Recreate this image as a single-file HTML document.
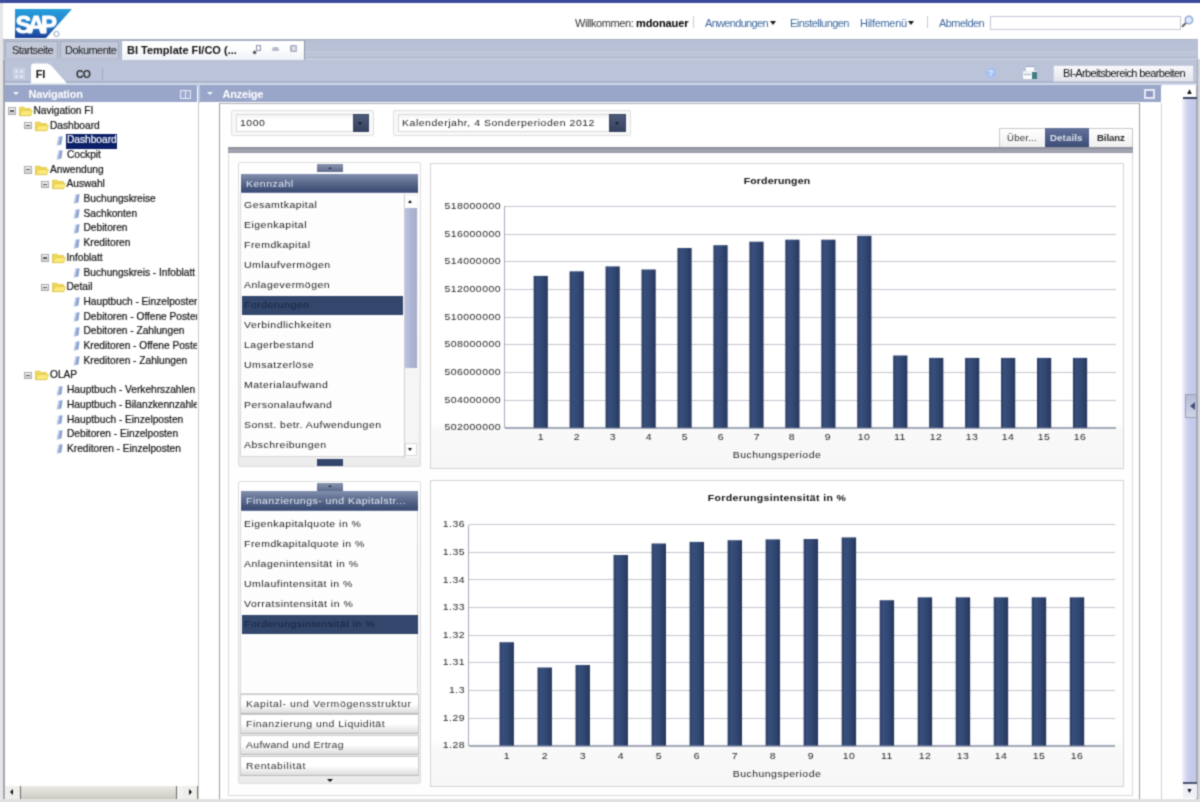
<!DOCTYPE html>
<html><head><meta charset="utf-8"><title>SAP BI</title>
<style>
html,body{margin:0;padding:0;}
body{width:1200px;height:802px;overflow:hidden;background:#fff;position:relative;font-family:"Liberation Sans",sans-serif;font-size:11px;color:#000;}
div{position:absolute;box-sizing:border-box;}
svg{position:absolute;overflow:visible;}
.t{white-space:nowrap;line-height:14px;margin-top:-7px;}
.th{font-size:11px;letter-spacing:-0.55px;}           /* tahoma-ish */
.tr{font-size:10.2px;letter-spacing:-0.02px;color:#0c0c0c;-webkit-text-stroke:0.2px #222;}                 /* tree arial */
.v{font-size:9.4px;letter-spacing:0.43px;color:#222;transform:scaleX(1.12);transform-origin:0 50%;}   /* verdana-ish */
.vs{font-size:9.4px;letter-spacing:0.4px;color:#262626;transform:scaleX(1.12);transform-origin:0 50%;}
.r{text-align:right;transform-origin:100% 50%;}
.c{text-align:center;transform-origin:50% 50%;}
#w{left:0;top:0;width:1200px;height:802px;filter:url(#soft);}
</style></head><body><svg width="0" height="0" style="position:absolute"><defs><filter id="soft" x="-2%" y="-3%" width="104%" height="106%" color-interpolation-filters="sRGB"><feConvolveMatrix order="3" kernelMatrix="0.0361 0.1178 0.0361 0.1178 0.3844 0.1178 0.0361 0.1178 0.0361" edgeMode="duplicate" preserveAlpha="true"/></filter></defs></svg><div id="w">

<div style="left:-20px;top:-20px;width:1240px;height:842px;background:#fff;"></div>
<div style="left:-20px;top:-20px;width:1240px;height:23px;background:#3c4a9b;"></div>
<div style="left:-20px;top:3px;width:23px;height:819px;background:#e6e6e6;"></div>
<div style="left:2.5px;top:59px;width:2.5px;height:740px;background:#a3a5b2;"></div>
<div style="left:1196px;top:59px;width:2.2px;height:740px;background:#a6a9b4;"></div>
<div style="left:1198.2px;top:59px;width:21.8px;height:740px;background:#d6d7dc;"></div>
<div style="left:-20px;top:798.8px;width:1240px;height:24px;background:#e2e2e2;"></div>
<svg style="left:15px;top:9px" width="58" height="30" viewBox="0 0 58 30">
<defs><linearGradient id="sg" x1="0" y1="0" x2="0" y2="1"><stop offset="0" stop-color="#239fdc"/><stop offset="0.5" stop-color="#2580cc"/><stop offset="1" stop-color="#1d3f95"/></linearGradient></defs>
<path d="M0 0 H57 L31 29 H0 Z" fill="url(#sg)"/>
<text x="0.5" y="23.6" font-family="Liberation Sans, sans-serif" font-weight="bold" font-size="24" letter-spacing="-3.9" fill="#fff" stroke="#fff" stroke-width="0.9" stroke-linejoin="round">SAP</text>
<circle cx="41.5" cy="25" r="2.6" fill="#fff" stroke="#8a96b4" stroke-width="0.9"/>
</svg>
<div class="t th" style="left:575px;top:22.7px;color:#333;letter-spacing:-0.42px">Willkommen: <b style="letter-spacing:-0.1px;color:#000">mdonauer</b></div>
<div style="left:693px;top:16px;width:1px;height:12px;background:#c5c9d6;"></div>
<div class="t th" style="left:705px;top:22.7px;color:#3f6aa0;letter-spacing:-0.68px">Anwendungen</div>
<div style="left:769.5px;top:20.5px;width:0px;height:0px;border-left:3.5px solid transparent;border-right:3.5px solid transparent;border-top:4.5px solid #1a1a1a;"></div>
<div class="t th" style="left:790px;top:22.7px;color:#3f6aa0">Einstellungen</div>
<div class="t th" style="left:860px;top:22.7px;color:#3f6aa0;letter-spacing:-0.3px">Hilfemenü</div>
<div style="left:907.5px;top:20.5px;width:0px;height:0px;border-left:3.5px solid transparent;border-right:3.5px solid transparent;border-top:4.5px solid #1a1a1a;"></div>
<div style="left:927px;top:16px;width:1px;height:12px;background:#c5c9d6;"></div>
<div class="t th" style="left:939px;top:22.7px;color:#3f6aa0">Abmelden</div>
<div style="left:990px;top:15.7px;width:190.6px;height:14.6px;background:#fff;border:1.3px solid #c3c6d8;"></div>
<svg style="left:1181px;top:14px" width="15" height="15" viewBox="0 0 15 15"><path d="M5.2 8.6 L1.6 12.2" stroke="#6a5a58" stroke-width="2" stroke-linecap="round"/><circle cx="7.9" cy="6" r="3.7" fill="#e3ecfa" stroke="#8fabde" stroke-width="1.6"/></svg>
<div style="left:3px;top:39px;width:1195px;height:20.5px;background:#b8c0d5;"></div>
<div style="left:3px;top:39px;width:1194px;height:1px;background:#a8aec0;"></div>
<div style="left:305px;top:51px;width:892px;height:1px;background:#c3cadc;"></div>
<div style="left:305px;top:52px;width:892px;height:5px;background:#bcc4d8;"></div>
<div style="left:305px;top:57px;width:892px;height:1px;background:#aab2c7;"></div>
<div style="left:305px;top:58px;width:892px;height:1.5px;background:#c6cddd;"></div>
<div style="left:5px;top:41px;width:53px;height:17px;background:#c3c9d9;border:1px solid #a3abc0;border-bottom:none;"></div>
<div class="t th" style="left:12px;top:50px;color:#222">Startseite</div>
<div style="left:60px;top:41px;width:59px;height:17px;background:#c3c9d9;border:1px solid #a3abc0;border-bottom:none;"></div>
<div class="t th" style="left:65px;top:50px;color:#222">Dokumente</div>
<div style="left:121px;top:39.5px;width:183.8px;height:20px;background:linear-gradient(#ffffff 30%,#eef1f8);border:1px solid #a9b1c6;border-right:1.3px solid #8f97a8;border-bottom:none;"></div>
<div class="t" style="left:127px;top:50px;color:#111;letter-spacing:0px"><b>BI Template FI/CO (...</b></div>
<div style="left:255.6px;top:45.3px;width:5.6px;height:5.8px;border:1.3px solid #8d93a4;background:#f4f6fa;"></div>
<div style="left:252.8px;top:50.8px;width:3px;height:2.6px;background:#4a4e5a;transform:rotate(-45deg);"></div>
<div style="left:271.5px;top:46.8px;width:7.6px;height:4.6px;background:#b5bdcc;border-radius:2.5px 2.5px 1px 1px;"></div>
<div style="left:289.5px;top:45.2px;width:7.6px;height:7px;background:#a9b1c2;border-radius:1px;"></div>
<svg style="left:289.5px;top:45.2px" width="7.6" height="7" viewBox="0 0 7.6 7"><path d="M2 1.6 L5.6 5.4 M5.6 1.6 L2 5.4" stroke="#f2f4f8" stroke-width="1.3"/></svg>
<div style="left:5px;top:59.5px;width:1192px;height:26px;background:#bac3d8;"></div>
<div style="left:5px;top:81.3px;width:1192px;height:1.4px;background:#a9b3cb;"></div>
<div style="left:5px;top:82.7px;width:1192px;height:2.6px;background:#cfd6e6;"></div>
<svg style="left:31px;top:60px" width="40" height="25" viewBox="0 0 40 25"><path d="M0 23.5 V6.5 Q0 3.5 3 3.5 H15 Q19 3.5 21.5 7 L36 23.5 Z" fill="#fff"/></svg>
<div style="left:13px;top:68px;width:12px;height:11px;background:#c4cce1;border:1px solid #cdd4e6;"></div>
<div style="left:15px;top:70px;width:3px;height:3px;background:#dde3f1;"></div>
<div style="left:20px;top:70px;width:3px;height:3px;background:#dde3f1;"></div>
<div style="left:15px;top:74.5px;width:3px;height:3px;background:#dde3f1;"></div>
<div style="left:20px;top:74.5px;width:3px;height:3px;background:#dde3f1;"></div>
<div class="t" style="left:35.8px;top:74px;color:#111;letter-spacing:-0.3px"><b>FI</b></div>
<div class="t" style="left:76px;top:74px;color:#2a2a2a;letter-spacing:-0.9px;font-size:10.5px"><b>CO</b></div>
<div style="left:101.5px;top:68px;width:1px;height:12px;background:#a2abc3;"></div>
<div style="left:984.5px;top:67px;width:12px;height:12px;border-radius:6px;background:radial-gradient(circle,#9dbaf4 0%,#a6c0f2 50%,rgba(180,190,214,0) 78%);"></div>
<div class="t" style="left:988px;top:73.3px;font-size:9px;font-weight:bold;color:#e8effc">?</div>
<div style="left:1026px;top:66px;width:8px;height:6px;background:#fbfcfe;border-top:1px solid #9aa6be;"></div>
<div style="left:1022.5px;top:71px;width:14px;height:7.5px;background:linear-gradient(#e9eef5,#ffffff);border-radius:1px;"></div>
<div style="left:1031.5px;top:72px;width:5px;height:6.5px;background:#3f7f80;"></div>
<div style="left:1024px;top:73.5px;width:7px;height:1px;background:#9fb0c4;"></div>
<div style="left:1053px;top:65px;width:141px;height:17px;background:linear-gradient(#f7f8fb,#e3e6ee);border:1px solid #c9cedb;"></div>
<div class="t th" style="left:1063px;top:73px;color:#111;letter-spacing:-0.62px">BI-Arbeitsbereich bearbeiten</div>
<div style="left:5px;top:85.3px;width:192px;height:17.2px;background:#99a6c9;"></div>
<div style="left:5px;top:102.5px;width:192px;height:696px;background:#fff;"></div>
<div style="left:12.5px;top:92.3px;width:0px;height:0px;border-left:3px solid transparent;border-right:3px solid transparent;border-top:3.5px solid #f4f6fc;"></div>
<div class="t" style="left:28.5px;top:93.7px;color:#fff;letter-spacing:-0.2px"><b>Navigation</b></div>
<div style="left:179.7px;top:89.5px;width:11.6px;height:9.4px;border:1.6px solid #e6eaf6;background:#a0acd0;"></div>
<div style="left:184.8px;top:90px;width:1.4px;height:8.5px;background:#e6eaf6;"></div>
<div style="left:199.3px;top:85.3px;width:962px;height:17.2px;background:#99a6c9;"></div>
<div style="left:207.3px;top:92.3px;width:0px;height:0px;border-left:3px solid transparent;border-right:3px solid transparent;border-top:3.5px solid #f4f6fc;"></div>
<div class="t" style="left:222.5px;top:93.7px;color:#fff;letter-spacing:-0.2px"><b>Anzeige</b></div>
<div style="left:1144.3px;top:89.4px;width:10.8px;height:9.6px;border:2px solid #e6e9f6;background:#8f99c4;"></div>
<div style="left:197.5px;top:85px;width:2px;height:17.5px;background:#bcc6df;"></div>
<div style="left:198px;top:102.5px;width:1px;height:696px;background:#c9c9ce;"></div>
<div style="left:1161px;top:102.5px;width:1px;height:696px;background:#cfd0d6;"></div>
<div style="left:219.2px;top:102.5px;width:1.1px;height:696px;background:#9c9da3;"></div>
<div style="left:219.3px;top:102.5px;width:920.6px;height:1.5px;background:#a9aab4;"></div>
<div style="left:1138.7px;top:102.5px;width:1.1px;height:696px;background:#9c9da3;"></div>
<div style="left:5px;top:101px;width:192px;height:684px;overflow:hidden;">
<div style="left:2.7px;top:6.2px;width:8px;height:7.6px;background:linear-gradient(#f4f4f4,#cfcfd2);border:1px solid #a9a9ae;"></div>
<div style="left:4.7px;top:9.4px;width:4px;height:1.2px;background:#5a5a5e;"></div>
<svg style="left:13.5px;top:3.8px" width="14" height="12" viewBox="0 0 14 12"><path d="M0.5 2.2 H5 L6.5 3.6 H11.5 V10.6 H0.5 Z" fill="#f1d94f" stroke="#d9bd45" stroke-width="0.7"/><path d="M0.5 10.6 L3 5.6 H13.5 L11.8 10.6 Z" fill="#f9ea7a" stroke="#dcc24a" stroke-width="0.7"/></svg>
<div class="t tr" style="left:28.5px;top:9.8px;">Navigation FI</div>
<div style="left:19.2px;top:20.9px;width:8px;height:7.6px;background:linear-gradient(#f4f4f4,#cfcfd2);border:1px solid #a9a9ae;"></div>
<div style="left:21.2px;top:24.1px;width:4px;height:1.2px;background:#5a5a5e;"></div>
<svg style="left:30.0px;top:18.5px" width="14" height="12" viewBox="0 0 14 12"><path d="M0.5 2.2 H5 L6.5 3.6 H11.5 V10.6 H0.5 Z" fill="#f1d94f" stroke="#d9bd45" stroke-width="0.7"/><path d="M0.5 10.6 L3 5.6 H13.5 L11.8 10.6 Z" fill="#f9ea7a" stroke="#dcc24a" stroke-width="0.7"/></svg>
<div class="t tr" style="left:45.0px;top:24.5px;">Dashboard</div>
<svg style="left:51.0px;top:34.6px" width="8" height="10" viewBox="0 0 8 10"><path d="M2.6 0.8 L6.6 0.3 L5.4 8.6 L0.8 9.6 Z" fill="#8ba2cf"/><path d="M2.6 0.8 L4 0.6 L2.4 9.2 L0.8 9.6 Z" fill="#c2cee8"/></svg>
<div style="left:61.0px;top:32.6px;width:51px;height:15px;background:#0c2068;"></div>
<div class="t tr" style="left:62.0px;top:39.2px;color:#fff;-webkit-text-stroke:0.2px #fff">Dashboard</div>
<svg style="left:51.0px;top:49.3px" width="8" height="10" viewBox="0 0 8 10"><path d="M2.6 0.8 L6.6 0.3 L5.4 8.6 L0.8 9.6 Z" fill="#8ba2cf"/><path d="M2.6 0.8 L4 0.6 L2.4 9.2 L0.8 9.6 Z" fill="#c2cee8"/></svg>
<div class="t tr" style="left:62.0px;top:53.9px;">Cockpit</div>
<div style="left:19.2px;top:65.0px;width:8px;height:7.6px;background:linear-gradient(#f4f4f4,#cfcfd2);border:1px solid #a9a9ae;"></div>
<div style="left:21.2px;top:68.2px;width:4px;height:1.2px;background:#5a5a5e;"></div>
<svg style="left:30.0px;top:62.6px" width="14" height="12" viewBox="0 0 14 12"><path d="M0.5 2.2 H5 L6.5 3.6 H11.5 V10.6 H0.5 Z" fill="#f1d94f" stroke="#d9bd45" stroke-width="0.7"/><path d="M0.5 10.6 L3 5.6 H13.5 L11.8 10.6 Z" fill="#f9ea7a" stroke="#dcc24a" stroke-width="0.7"/></svg>
<div class="t tr" style="left:45.0px;top:68.6px;">Anwendung</div>
<div style="left:35.7px;top:79.7px;width:8px;height:7.6px;background:linear-gradient(#f4f4f4,#cfcfd2);border:1px solid #a9a9ae;"></div>
<div style="left:37.7px;top:82.9px;width:4px;height:1.2px;background:#5a5a5e;"></div>
<svg style="left:46.5px;top:77.3px" width="14" height="12" viewBox="0 0 14 12"><path d="M0.5 2.2 H5 L6.5 3.6 H11.5 V10.6 H0.5 Z" fill="#f1d94f" stroke="#d9bd45" stroke-width="0.7"/><path d="M0.5 10.6 L3 5.6 H13.5 L11.8 10.6 Z" fill="#f9ea7a" stroke="#dcc24a" stroke-width="0.7"/></svg>
<div class="t tr" style="left:61.5px;top:83.3px;">Auswahl</div>
<svg style="left:67.5px;top:93.4px" width="8" height="10" viewBox="0 0 8 10"><path d="M2.6 0.8 L6.6 0.3 L5.4 8.6 L0.8 9.6 Z" fill="#8ba2cf"/><path d="M2.6 0.8 L4 0.6 L2.4 9.2 L0.8 9.6 Z" fill="#c2cee8"/></svg>
<div class="t tr" style="left:78.5px;top:98.0px;">Buchungskreise</div>
<svg style="left:67.5px;top:108.1px" width="8" height="10" viewBox="0 0 8 10"><path d="M2.6 0.8 L6.6 0.3 L5.4 8.6 L0.8 9.6 Z" fill="#8ba2cf"/><path d="M2.6 0.8 L4 0.6 L2.4 9.2 L0.8 9.6 Z" fill="#c2cee8"/></svg>
<div class="t tr" style="left:78.5px;top:112.7px;">Sachkonten</div>
<svg style="left:67.5px;top:122.8px" width="8" height="10" viewBox="0 0 8 10"><path d="M2.6 0.8 L6.6 0.3 L5.4 8.6 L0.8 9.6 Z" fill="#8ba2cf"/><path d="M2.6 0.8 L4 0.6 L2.4 9.2 L0.8 9.6 Z" fill="#c2cee8"/></svg>
<div class="t tr" style="left:78.5px;top:127.4px;">Debitoren</div>
<svg style="left:67.5px;top:137.5px" width="8" height="10" viewBox="0 0 8 10"><path d="M2.6 0.8 L6.6 0.3 L5.4 8.6 L0.8 9.6 Z" fill="#8ba2cf"/><path d="M2.6 0.8 L4 0.6 L2.4 9.2 L0.8 9.6 Z" fill="#c2cee8"/></svg>
<div class="t tr" style="left:78.5px;top:142.1px;">Kreditoren</div>
<div style="left:35.7px;top:153.2px;width:8px;height:7.6px;background:linear-gradient(#f4f4f4,#cfcfd2);border:1px solid #a9a9ae;"></div>
<div style="left:37.7px;top:156.4px;width:4px;height:1.2px;background:#5a5a5e;"></div>
<svg style="left:46.5px;top:150.8px" width="14" height="12" viewBox="0 0 14 12"><path d="M0.5 2.2 H5 L6.5 3.6 H11.5 V10.6 H0.5 Z" fill="#f1d94f" stroke="#d9bd45" stroke-width="0.7"/><path d="M0.5 10.6 L3 5.6 H13.5 L11.8 10.6 Z" fill="#f9ea7a" stroke="#dcc24a" stroke-width="0.7"/></svg>
<div class="t tr" style="left:61.5px;top:156.8px;">Infoblatt</div>
<svg style="left:67.5px;top:166.9px" width="8" height="10" viewBox="0 0 8 10"><path d="M2.6 0.8 L6.6 0.3 L5.4 8.6 L0.8 9.6 Z" fill="#8ba2cf"/><path d="M2.6 0.8 L4 0.6 L2.4 9.2 L0.8 9.6 Z" fill="#c2cee8"/></svg>
<div class="t tr" style="left:78.5px;top:171.5px;">Buchungskreis - Infoblatt</div>
<div style="left:35.7px;top:182.6px;width:8px;height:7.6px;background:linear-gradient(#f4f4f4,#cfcfd2);border:1px solid #a9a9ae;"></div>
<div style="left:37.7px;top:185.8px;width:4px;height:1.2px;background:#5a5a5e;"></div>
<svg style="left:46.5px;top:180.2px" width="14" height="12" viewBox="0 0 14 12"><path d="M0.5 2.2 H5 L6.5 3.6 H11.5 V10.6 H0.5 Z" fill="#f1d94f" stroke="#d9bd45" stroke-width="0.7"/><path d="M0.5 10.6 L3 5.6 H13.5 L11.8 10.6 Z" fill="#f9ea7a" stroke="#dcc24a" stroke-width="0.7"/></svg>
<div class="t tr" style="left:61.5px;top:186.2px;">Detail</div>
<svg style="left:67.5px;top:196.3px" width="8" height="10" viewBox="0 0 8 10"><path d="M2.6 0.8 L6.6 0.3 L5.4 8.6 L0.8 9.6 Z" fill="#8ba2cf"/><path d="M2.6 0.8 L4 0.6 L2.4 9.2 L0.8 9.6 Z" fill="#c2cee8"/></svg>
<div class="t tr" style="left:78.5px;top:200.9px;">Hauptbuch - Einzelposten</div>
<svg style="left:67.5px;top:211.0px" width="8" height="10" viewBox="0 0 8 10"><path d="M2.6 0.8 L6.6 0.3 L5.4 8.6 L0.8 9.6 Z" fill="#8ba2cf"/><path d="M2.6 0.8 L4 0.6 L2.4 9.2 L0.8 9.6 Z" fill="#c2cee8"/></svg>
<div class="t tr" style="left:78.5px;top:215.6px;">Debitoren - Offene Posten</div>
<svg style="left:67.5px;top:225.7px" width="8" height="10" viewBox="0 0 8 10"><path d="M2.6 0.8 L6.6 0.3 L5.4 8.6 L0.8 9.6 Z" fill="#8ba2cf"/><path d="M2.6 0.8 L4 0.6 L2.4 9.2 L0.8 9.6 Z" fill="#c2cee8"/></svg>
<div class="t tr" style="left:78.5px;top:230.3px;">Debitoren - Zahlungen</div>
<svg style="left:67.5px;top:240.4px" width="8" height="10" viewBox="0 0 8 10"><path d="M2.6 0.8 L6.6 0.3 L5.4 8.6 L0.8 9.6 Z" fill="#8ba2cf"/><path d="M2.6 0.8 L4 0.6 L2.4 9.2 L0.8 9.6 Z" fill="#c2cee8"/></svg>
<div class="t tr" style="left:78.5px;top:245.0px;">Kreditoren - Offene Posten</div>
<svg style="left:67.5px;top:255.1px" width="8" height="10" viewBox="0 0 8 10"><path d="M2.6 0.8 L6.6 0.3 L5.4 8.6 L0.8 9.6 Z" fill="#8ba2cf"/><path d="M2.6 0.8 L4 0.6 L2.4 9.2 L0.8 9.6 Z" fill="#c2cee8"/></svg>
<div class="t tr" style="left:78.5px;top:259.7px;">Kreditoren - Zahlungen</div>
<div style="left:19.2px;top:270.8px;width:8px;height:7.6px;background:linear-gradient(#f4f4f4,#cfcfd2);border:1px solid #a9a9ae;"></div>
<div style="left:21.2px;top:274.0px;width:4px;height:1.2px;background:#5a5a5e;"></div>
<svg style="left:30.0px;top:268.4px" width="14" height="12" viewBox="0 0 14 12"><path d="M0.5 2.2 H5 L6.5 3.6 H11.5 V10.6 H0.5 Z" fill="#f1d94f" stroke="#d9bd45" stroke-width="0.7"/><path d="M0.5 10.6 L3 5.6 H13.5 L11.8 10.6 Z" fill="#f9ea7a" stroke="#dcc24a" stroke-width="0.7"/></svg>
<div class="t tr" style="left:45.0px;top:274.4px;">OLAP</div>
<svg style="left:51.0px;top:284.5px" width="8" height="10" viewBox="0 0 8 10"><path d="M2.6 0.8 L6.6 0.3 L5.4 8.6 L0.8 9.6 Z" fill="#8ba2cf"/><path d="M2.6 0.8 L4 0.6 L2.4 9.2 L0.8 9.6 Z" fill="#c2cee8"/></svg>
<div class="t tr" style="left:62.0px;top:289.1px;">Hauptbuch - Verkehrszahlen</div>
<svg style="left:51.0px;top:299.2px" width="8" height="10" viewBox="0 0 8 10"><path d="M2.6 0.8 L6.6 0.3 L5.4 8.6 L0.8 9.6 Z" fill="#8ba2cf"/><path d="M2.6 0.8 L4 0.6 L2.4 9.2 L0.8 9.6 Z" fill="#c2cee8"/></svg>
<div class="t tr" style="left:62.0px;top:303.8px;">Hauptbuch - Bilanzkennzahlen</div>
<svg style="left:51.0px;top:313.9px" width="8" height="10" viewBox="0 0 8 10"><path d="M2.6 0.8 L6.6 0.3 L5.4 8.6 L0.8 9.6 Z" fill="#8ba2cf"/><path d="M2.6 0.8 L4 0.6 L2.4 9.2 L0.8 9.6 Z" fill="#c2cee8"/></svg>
<div class="t tr" style="left:62.0px;top:318.5px;">Hauptbuch - Einzelposten</div>
<svg style="left:51.0px;top:328.6px" width="8" height="10" viewBox="0 0 8 10"><path d="M2.6 0.8 L6.6 0.3 L5.4 8.6 L0.8 9.6 Z" fill="#8ba2cf"/><path d="M2.6 0.8 L4 0.6 L2.4 9.2 L0.8 9.6 Z" fill="#c2cee8"/></svg>
<div class="t tr" style="left:62.0px;top:333.2px;">Debitoren - Einzelposten</div>
<svg style="left:51.0px;top:343.3px" width="8" height="10" viewBox="0 0 8 10"><path d="M2.6 0.8 L6.6 0.3 L5.4 8.6 L0.8 9.6 Z" fill="#8ba2cf"/><path d="M2.6 0.8 L4 0.6 L2.4 9.2 L0.8 9.6 Z" fill="#c2cee8"/></svg>
<div class="t tr" style="left:62.0px;top:347.9px;">Kreditoren - Einzelposten</div>
</div>
<div style="left:5px;top:785.5px;width:192.5px;height:13.2px;background:#f3f3f1;"></div>
<div style="left:5.5px;top:785.5px;width:14.5px;height:13.2px;background:#efeeea;"></div>
<div style="left:9.5px;top:789.2px;width:0px;height:0px;border-top:3px solid transparent;border-bottom:3px solid transparent;border-right:3.5px solid #111;"></div>
<div style="left:20px;top:786px;width:156.5px;height:12.5px;background:linear-gradient(#eae9e4,#d6d4cc 70%,#cbc9c0);border-left:1.2px solid #6a6a66;border-right:1.2px solid #6a6a66;"></div>
<div style="left:183px;top:785.5px;width:14.5px;height:13.2px;background:#efeeea;border-right:1.2px solid #77776f;"></div>
<div style="left:188.5px;top:789.2px;width:0px;height:0px;border-top:3px solid transparent;border-bottom:3px solid transparent;border-left:3.5px solid #111;"></div>
<div style="left:1161.5px;top:84.5px;width:34.5px;height:18.5px;background:#fff;"></div>
<div style="left:1182.3px;top:99px;width:13.7px;height:684px;background:linear-gradient(90deg,#f2f3fb,#d0d3ef 35%,#c7caeb 60%,#c5c8e8);"></div>
<div class="t" style="left:1185.5px;top:91.5px;font-size:8px;color:#111">&#9650;</div>
<div style="left:1183px;top:97px;width:14px;height:2px;background:#3d4660;"></div>
<div style="left:1183px;top:783px;width:14px;height:15px;background:#eef0f6;"></div>
<div style="left:1183px;top:781.5px;width:14px;height:2px;background:#4a5470;"></div>
<div class="t" style="left:1186px;top:791px;font-size:7px;color:#111">&#9660;</div>
<div style="left:1185.3px;top:393.5px;width:12.2px;height:24px;background:linear-gradient(#b4bbd4,#cfd4e6);border:1px solid #9aa1b6;"></div>
<div style="left:1189.5px;top:401.5px;width:0px;height:0px;border-top:4.3px solid transparent;border-bottom:4.3px solid transparent;border-right:5px solid #474f78;"></div>
<div style="left:230.8px;top:110.4px;width:143.4px;height:25.6px;background:#f8f8f8;border:1px solid #dfdfdf;border-radius:2px;"></div>
<div style="left:235.8px;top:114px;width:133.4px;height:18.4px;background:linear-gradient(#f3f3f3,#ffffff 30%);border:1px solid #dadada;"></div>
<div class="t vs" style="left:239.8px;top:123.3px;letter-spacing:0.47px">1000</div>
<div style="left:352.70000000000005px;top:114.2px;width:16.5px;height:18px;background:linear-gradient(#4d5b7a,#34425f);border:1px solid #3a4763;"></div>
<div style="left:358.40000000000003px;top:121.8px;width:0px;height:0px;border-left:2.5px solid transparent;border-right:2.5px solid transparent;border-top:3px solid #16203a;"></div>
<div style="left:392.5px;top:110.4px;width:238px;height:25.6px;background:#f8f8f8;border:1px solid #dfdfdf;border-radius:2px;"></div>
<div style="left:397.5px;top:114px;width:228px;height:18.4px;background:linear-gradient(#f3f3f3,#ffffff 30%);border:1px solid #dadada;"></div>
<div class="t vs" style="left:401.5px;top:123.3px;letter-spacing:0.47px">Kalenderjahr, 4 Sonderperioden 2012</div>
<div style="left:609.0px;top:114.2px;width:16.5px;height:18px;background:linear-gradient(#4d5b7a,#34425f);border:1px solid #3a4763;"></div>
<div style="left:614.7px;top:121.8px;width:0px;height:0px;border-left:2.5px solid transparent;border-right:2.5px solid transparent;border-top:3px solid #16203a;"></div>
<div style="left:999px;top:127.6px;width:134px;height:20.4px;background:linear-gradient(#ffffff,#efefef);border:1px solid #c9c9c9;border-bottom:none;"></div>
<div style="left:1044.6px;top:128px;width:44.2px;height:20px;background:linear-gradient(#63729a,#394b73);"></div>
<div class="t v" style="left:1007px;top:138px;font-size:8.6px;letter-spacing:0.2px;color:#333">Über...</div>
<div class="t v" style="left:1049.5px;top:138px;font-size:8.6px;letter-spacing:0.12px;color:#dfe4f0"><b>Details</b></div>
<div class="t v" style="left:1097px;top:138px;font-size:8.6px;letter-spacing:-0.1px;color:#2a2a2a"><b>Bilanz</b></div>
<div style="left:228.3px;top:146.8px;width:904.7px;height:6px;background:linear-gradient(#8c8f9b,#999ba8 40%,#a8a9b8 62%,#94969f);"></div>
<div style="left:228px;top:152.5px;width:905px;height:643.3px;border:1.3px solid #dadada;border-top:none;background:#fefefe;"></div>
<div style="left:237.6px;top:162.3px;width:183.2px;height:304.7px;background:linear-gradient(#ffffff,#ececec);border:1px solid #dedede;border-radius:2px;"></div>
<div style="left:316.5px;top:164.3px;width:26.5px;height:8px;background:linear-gradient(#8893ad,#5f6c8c);"></div>
<div style="left:327.6px;top:166.70000000000002px;width:0px;height:0px;border-left:2.2px solid transparent;border-right:2.2px solid transparent;border-bottom:2.6px solid #2c3857;"></div>
<div style="left:240.5px;top:173.9px;width:177px;height:19.4px;background:linear-gradient(#8190ae,#5c6b8c 45%,#3a4c74 92%,#7685a6);"></div>
<div class="t v" style="left:246.3px;top:183.6px;color:#e6eaf4;">Kennzahl</div>
<div style="left:240px;top:193.3px;width:177.5px;height:264.2px;background:#fdfdfd;border:1px solid #d8d8d8;border-top:none;"></div>
<div class="t v" style="left:243.5px;top:205px;">Gesamtkapital</div>
<div class="t v" style="left:243.5px;top:225px;">Eigenkapital</div>
<div class="t v" style="left:243.5px;top:245px;">Fremdkapital</div>
<div class="t v" style="left:243.5px;top:265px;">Umlaufvermögen</div>
<div class="t v" style="left:243.5px;top:285px;">Anlagevermögen</div>
<div style="left:241.5px;top:295.8px;width:161.5px;height:19px;background:#33466c;"></div>
<div class="t v" style="left:243.5px;top:305px;color:#16233f">Forderungen</div>
<div class="t v" style="left:243.5px;top:325px;">Verbindlichkeiten</div>
<div class="t v" style="left:243.5px;top:345px;">Lagerbestand</div>
<div class="t v" style="left:243.5px;top:365px;">Umsatzerlöse</div>
<div class="t v" style="left:243.5px;top:385px;">Materialaufwand</div>
<div class="t v" style="left:243.5px;top:405px;">Personalaufwand</div>
<div class="t v" style="left:243.5px;top:425px;">Sonst. betr. Aufwendungen</div>
<div class="t v" style="left:243.5px;top:445px;">Abschreibungen</div>
<div style="left:403.6px;top:194px;width:14px;height:263.5px;background:#f6f6f6;border-left:1px solid #cfcfd2;"></div>
<div style="left:405px;top:196px;width:12.3px;height:12px;background:#fff;"></div>
<div style="left:408.3px;top:200.3px;width:0px;height:0px;border-left:2.6px solid transparent;border-right:2.6px solid transparent;border-bottom:3.4px solid #111;"></div>
<div style="left:405px;top:208px;width:12.3px;height:160px;background:linear-gradient(90deg,#bcc3de,#adb5d6 50%,#a8adc6);"></div>
<div style="left:405px;top:442.5px;width:12.3px;height:13.5px;background:#fff;border:1px solid #dadada;"></div>
<div style="left:408.3px;top:447.6px;width:0px;height:0px;border-left:2.6px solid transparent;border-right:2.6px solid transparent;border-top:3.4px solid #111;"></div>
<div style="left:316.5px;top:458.5px;width:26.5px;height:7.5px;background:#34466c;"></div>
<div style="left:237.6px;top:481px;width:183.2px;height:302.5px;background:linear-gradient(#ffffff,#ececec);border:1px solid #dedede;border-radius:2px;"></div>
<div style="left:316.5px;top:483px;width:26.5px;height:8px;background:linear-gradient(#8893ad,#5f6c8c);"></div>
<div style="left:327.6px;top:485.4px;width:0px;height:0px;border-left:2.2px solid transparent;border-right:2.2px solid transparent;border-bottom:2.6px solid #2c3857;"></div>
<div style="left:240.5px;top:491.2px;width:177px;height:19.6px;background:linear-gradient(#8190ae,#5c6b8c 45%,#3a4c74 92%,#7685a6);"></div>
<div class="t v" style="left:246.3px;top:501.0px;color:#e6eaf4;">Finanzierungs- und Kapitalstr...</div>
<div style="left:240px;top:510.6px;width:178px;height:183px;background:#fdfdfd;border:1px solid #d8d8d8;border-top:none;"></div>
<div class="t v" style="left:243.5px;top:524px;">Eigenkapitalquote in %</div>
<div class="t v" style="left:243.5px;top:544px;">Fremdkapitalquote in %</div>
<div class="t v" style="left:243.5px;top:564px;">Anlagenintensität in %</div>
<div class="t v" style="left:243.5px;top:584px;">Umlaufintensität in %</div>
<div class="t v" style="left:243.5px;top:604px;">Vorratsintensität in %</div>
<div style="left:241.5px;top:615px;width:176px;height:19px;background:#33466c;"></div>
<div class="t v" style="left:243.5px;top:624px;color:#16233f">Forderungsintensität in %</div>
<div style="left:240px;top:693.5px;width:178.5px;height:20.3px;background:linear-gradient(#ffffff 50%,#dcdcdc);border:1px solid #cbcbcb;border-bottom-color:#b9b9b9;"></div>
<div class="t v" style="left:246px;top:703.5px;color:#333;letter-spacing:0.55px">Kapital- und Vermögensstruktur</div>
<div style="left:240px;top:714.2px;width:178.5px;height:20.3px;background:linear-gradient(#ffffff 50%,#dcdcdc);border:1px solid #cbcbcb;border-bottom-color:#b9b9b9;"></div>
<div class="t v" style="left:246px;top:724.2px;color:#333;letter-spacing:0.43px">Finanzierung und Liquidität</div>
<div style="left:240px;top:734.9px;width:178.5px;height:20.3px;background:linear-gradient(#ffffff 50%,#dcdcdc);border:1px solid #cbcbcb;border-bottom-color:#b9b9b9;"></div>
<div class="t v" style="left:246px;top:744.9px;color:#333;letter-spacing:0.25px">Aufwand und Ertrag</div>
<div style="left:240px;top:755.6px;width:178.5px;height:20.3px;background:linear-gradient(#ffffff 50%,#dcdcdc);border:1px solid #cbcbcb;border-bottom-color:#b9b9b9;"></div>
<div class="t v" style="left:246px;top:765.6px;color:#333;letter-spacing:0.55px">Rentabilität</div>
<div style="left:327px;top:779.2px;width:0px;height:0px;border-left:3px solid transparent;border-right:3px solid transparent;border-top:3.6px solid #111;"></div>
<div style="left:430px;top:163px;width:694px;height:305.6px;background:linear-gradient(#ffffff 85.1%,#f9f9f9 87.1%,#f7f7f7);border:1.2px solid #d4d4d4;"></div>
<div class="t c vs" style="left:430px;width:694px;top:180.5px;font-weight:bold;letter-spacing:0.15px;color:#111">Forderungen</div>
<div style="left:504.8px;top:205.8px;width:611.2px;height:1px;background:#c3c6d0;"></div>
<div class="t r vs" style="left:430.5px;width:70px;top:205.9px;">518000000</div>
<div style="left:504.8px;top:233.5px;width:611.2px;height:1px;background:#c3c6d0;"></div>
<div class="t r vs" style="left:430.5px;width:70px;top:233.6px;">516000000</div>
<div style="left:504.8px;top:261.2px;width:611.2px;height:1px;background:#c3c6d0;"></div>
<div class="t r vs" style="left:430.5px;width:70px;top:261.3px;">514000000</div>
<div style="left:504.8px;top:288.9px;width:611.2px;height:1px;background:#c3c6d0;"></div>
<div class="t r vs" style="left:430.5px;width:70px;top:289.0px;">512000000</div>
<div style="left:504.8px;top:316.6px;width:611.2px;height:1px;background:#c3c6d0;"></div>
<div class="t r vs" style="left:430.5px;width:70px;top:316.7px;">510000000</div>
<div style="left:504.8px;top:344.2px;width:611.2px;height:1px;background:#c3c6d0;"></div>
<div class="t r vs" style="left:430.5px;width:70px;top:344.3px;">508000000</div>
<div style="left:504.8px;top:371.9px;width:611.2px;height:1px;background:#c3c6d0;"></div>
<div class="t r vs" style="left:430.5px;width:70px;top:372.0px;">506000000</div>
<div style="left:504.8px;top:399.6px;width:611.2px;height:1px;background:#c3c6d0;"></div>
<div class="t r vs" style="left:430.5px;width:70px;top:399.7px;">504000000</div>
<div style="left:504.8px;top:427.3px;width:611.2px;height:1px;background:#a3a9ba;height:1.6px;"></div>
<div class="t r vs" style="left:430.5px;width:70px;top:427.4px;">502000000</div>
<div style="left:504.2px;top:206.3px;width:1.1px;height:221.5px;background:#a2aac0;"></div>
<svg style="left:0;top:0" width="1200" height="802" viewBox="0 0 1200 802"><defs><linearGradient id="bg163" x1="0" y1="0" x2="1" y2="0"><stop offset="0" stop-color="#2a3b61"/><stop offset="0.22" stop-color="#384e7c"/><stop offset="0.55" stop-color="#334974"/><stop offset="0.88" stop-color="#2a3c63"/><stop offset="1" stop-color="#25355a"/></linearGradient></defs><rect x="533.65" y="275.9" width="14.2" height="151.9" fill="url(#bg163)"/><rect x="569.61" y="271.3" width="14.2" height="156.5" fill="url(#bg163)"/><rect x="605.56" y="266.4" width="14.2" height="161.4" fill="url(#bg163)"/><rect x="641.51" y="269.5" width="14.2" height="158.3" fill="url(#bg163)"/><rect x="677.46" y="248" width="14.2" height="179.8" fill="url(#bg163)"/><rect x="713.42" y="245.2" width="14.2" height="182.6" fill="url(#bg163)"/><rect x="749.37" y="241.7" width="14.2" height="186.1" fill="url(#bg163)"/><rect x="785.32" y="239.7" width="14.2" height="188.1" fill="url(#bg163)"/><rect x="821.28" y="239.7" width="14.2" height="188.1" fill="url(#bg163)"/><rect x="857.23" y="235.8" width="14.2" height="192.0" fill="url(#bg163)"/><rect x="893.18" y="355.5" width="14.2" height="72.3" fill="url(#bg163)"/><rect x="929.14" y="357.9" width="14.2" height="69.9" fill="url(#bg163)"/><rect x="965.09" y="357.9" width="14.2" height="69.9" fill="url(#bg163)"/><rect x="1001.04" y="357.9" width="14.2" height="69.9" fill="url(#bg163)"/><rect x="1036.99" y="357.9" width="14.2" height="69.9" fill="url(#bg163)"/><rect x="1072.95" y="357.9" width="14.2" height="69.9" fill="url(#bg163)"/></svg>
<div class="t c vs" style="left:525.8px;width:30px;top:437px;">1</div>
<div class="t c vs" style="left:561.7px;width:30px;top:437px;">2</div>
<div class="t c vs" style="left:597.7px;width:30px;top:437px;">3</div>
<div class="t c vs" style="left:633.6px;width:30px;top:437px;">4</div>
<div class="t c vs" style="left:669.6px;width:30px;top:437px;">5</div>
<div class="t c vs" style="left:705.5px;width:30px;top:437px;">6</div>
<div class="t c vs" style="left:741.5px;width:30px;top:437px;">7</div>
<div class="t c vs" style="left:777.4px;width:30px;top:437px;">8</div>
<div class="t c vs" style="left:813.4px;width:30px;top:437px;">9</div>
<div class="t c vs" style="left:849.3px;width:30px;top:437px;">10</div>
<div class="t c vs" style="left:885.3px;width:30px;top:437px;">11</div>
<div class="t c vs" style="left:921.2px;width:30px;top:437px;">12</div>
<div class="t c vs" style="left:957.2px;width:30px;top:437px;">13</div>
<div class="t c vs" style="left:993.1px;width:30px;top:437px;">14</div>
<div class="t c vs" style="left:1029.1px;width:30px;top:437px;">15</div>
<div class="t c vs" style="left:1065.0px;width:30px;top:437px;">16</div>
<div class="t c vs" style="left:430px;width:694px;top:454.5px;">Buchungsperiode</div>
<div style="left:430px;top:480px;width:694px;height:307.2px;background:linear-gradient(#ffffff 85.0%,#f9f9f9 87.0%,#f7f7f7);border:1.2px solid #d4d4d4;"></div>
<div class="t c vs" style="left:430px;width:694px;top:498px;font-weight:bold;letter-spacing:0.15px;color:#111"><span style="letter-spacing:0.32px">Forderungsintensität in %</span></div>
<div style="left:468.7px;top:524.2px;width:646.3px;height:1px;background:#c3c6d0;"></div>
<div class="t r vs" style="left:395px;width:70px;top:524.3px;">1.36</div>
<div style="left:468.7px;top:551.8px;width:646.3px;height:1px;background:#c3c6d0;"></div>
<div class="t r vs" style="left:395px;width:70px;top:551.9px;">1.35</div>
<div style="left:468.7px;top:579.4px;width:646.3px;height:1px;background:#c3c6d0;"></div>
<div class="t r vs" style="left:395px;width:70px;top:579.5px;">1.34</div>
<div style="left:468.7px;top:607.0px;width:646.3px;height:1px;background:#c3c6d0;"></div>
<div class="t r vs" style="left:395px;width:70px;top:607.1px;">1.33</div>
<div style="left:468.7px;top:634.7px;width:646.3px;height:1px;background:#c3c6d0;"></div>
<div class="t r vs" style="left:395px;width:70px;top:634.8px;">1.32</div>
<div style="left:468.7px;top:662.3px;width:646.3px;height:1px;background:#c3c6d0;"></div>
<div class="t r vs" style="left:395px;width:70px;top:662.4px;">1.31</div>
<div style="left:468.7px;top:689.9px;width:646.3px;height:1px;background:#c3c6d0;"></div>
<div class="t r vs" style="left:395px;width:70px;top:690.0px;">1.3</div>
<div style="left:468.7px;top:717.5px;width:646.3px;height:1px;background:#c3c6d0;"></div>
<div class="t r vs" style="left:395px;width:70px;top:717.6px;">1.29</div>
<div style="left:468.7px;top:745.1px;width:646.3px;height:1px;background:#a3a9ba;height:1.6px;"></div>
<div class="t r vs" style="left:395px;width:70px;top:745.2px;">1.28</div>
<div style="left:468.09999999999997px;top:524.7px;width:1.1px;height:220.89999999999998px;background:#a2aac0;"></div>
<svg style="left:0;top:0" width="1200" height="802" viewBox="0 0 1200 802"><defs><linearGradient id="bg480" x1="0" y1="0" x2="1" y2="0"><stop offset="0" stop-color="#2a3b61"/><stop offset="0.22" stop-color="#384e7c"/><stop offset="0.55" stop-color="#334974"/><stop offset="0.88" stop-color="#2a3c63"/><stop offset="1" stop-color="#25355a"/></linearGradient></defs><rect x="499.52" y="642.2" width="14.4" height="103.4" fill="url(#bg480)"/><rect x="537.54" y="667.5" width="14.4" height="78.1" fill="url(#bg480)"/><rect x="575.55" y="665" width="14.4" height="80.6" fill="url(#bg480)"/><rect x="613.57" y="555" width="14.4" height="190.6" fill="url(#bg480)"/><rect x="651.59" y="543.5" width="14.4" height="202.1" fill="url(#bg480)"/><rect x="689.61" y="541.9" width="14.4" height="203.7" fill="url(#bg480)"/><rect x="727.62" y="540.2" width="14.4" height="205.4" fill="url(#bg480)"/><rect x="765.64" y="539.4" width="14.4" height="206.2" fill="url(#bg480)"/><rect x="803.66" y="539" width="14.4" height="206.6" fill="url(#bg480)"/><rect x="841.68" y="537.4" width="14.4" height="208.2" fill="url(#bg480)"/><rect x="879.69" y="600.2" width="14.4" height="145.4" fill="url(#bg480)"/><rect x="917.71" y="597.3" width="14.4" height="148.3" fill="url(#bg480)"/><rect x="955.73" y="597.3" width="14.4" height="148.3" fill="url(#bg480)"/><rect x="993.75" y="597.3" width="14.4" height="148.3" fill="url(#bg480)"/><rect x="1031.76" y="597.3" width="14.4" height="148.3" fill="url(#bg480)"/><rect x="1069.78" y="597.3" width="14.4" height="148.3" fill="url(#bg480)"/></svg>
<div class="t c vs" style="left:491.7px;width:30px;top:755.5px;">1</div>
<div class="t c vs" style="left:529.7px;width:30px;top:755.5px;">2</div>
<div class="t c vs" style="left:567.8px;width:30px;top:755.5px;">3</div>
<div class="t c vs" style="left:605.8px;width:30px;top:755.5px;">4</div>
<div class="t c vs" style="left:643.8px;width:30px;top:755.5px;">5</div>
<div class="t c vs" style="left:681.8px;width:30px;top:755.5px;">6</div>
<div class="t c vs" style="left:719.8px;width:30px;top:755.5px;">7</div>
<div class="t c vs" style="left:757.8px;width:30px;top:755.5px;">8</div>
<div class="t c vs" style="left:795.9px;width:30px;top:755.5px;">9</div>
<div class="t c vs" style="left:833.9px;width:30px;top:755.5px;">10</div>
<div class="t c vs" style="left:871.9px;width:30px;top:755.5px;">11</div>
<div class="t c vs" style="left:909.9px;width:30px;top:755.5px;">12</div>
<div class="t c vs" style="left:947.9px;width:30px;top:755.5px;">13</div>
<div class="t c vs" style="left:985.9px;width:30px;top:755.5px;">14</div>
<div class="t c vs" style="left:1024.0px;width:30px;top:755.5px;">15</div>
<div class="t c vs" style="left:1062.0px;width:30px;top:755.5px;">16</div>
<div class="t c vs" style="left:430px;width:694px;top:774px;">Buchungsperiode</div>
</div></body></html>
